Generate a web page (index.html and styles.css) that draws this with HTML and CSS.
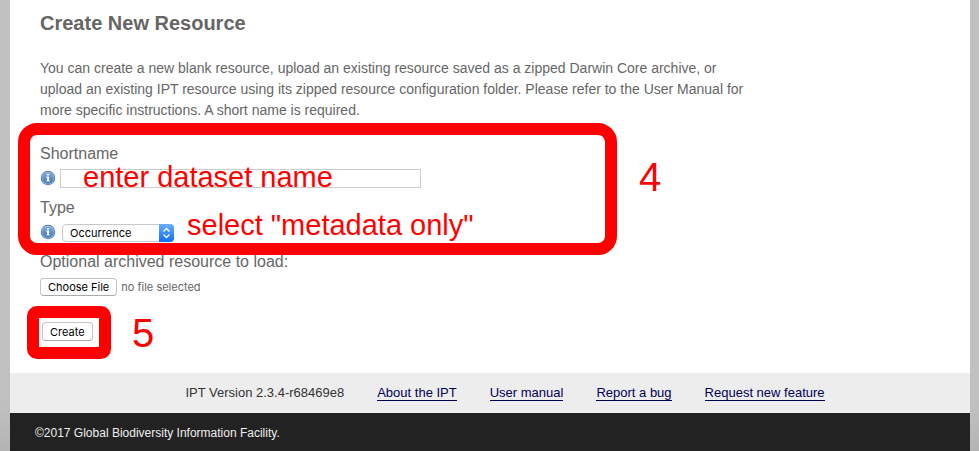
FILE: index.html
```html
<!DOCTYPE html>
<html lang="en">
<head>
<meta charset="utf-8">
<title>Create New Resource</title>
<link rel="stylesheet" href="styles.css">
</head>
<body>
<svg class="defs" aria-hidden="true">
  <defs>
    <linearGradient id="ball" x1="0" y1="0" x2="0" y2="1">
      <stop offset="0" stop-color="#86addc"/>
      <stop offset="1" stop-color="#3f74b8"/>
    </linearGradient>
    <symbol id="info" viewBox="0 0 16 16">
      <circle cx="8" cy="8" r="7.2" fill="#3f6fae"/>
      <circle cx="8" cy="8" r="6.4" fill="#a9c4e6"/>
      <circle cx="8" cy="8" r="5.8" fill="url(#ball)"/>
      <path d="M7 4h2v1.6H7zM6.3 6.5H9v4h.8v1.1H6.3v-1.1h.8V7.6h-.8z" fill="#fff"/>
    </symbol>
  </defs>
</svg>
<div class="page">
  <main class="content">
    <h1>Create New Resource</h1>
    <p class="intro">You can create a new blank resource, upload an existing resource saved as a zipped Darwin Core archive, or upload an existing IPT resource using its zipped resource configuration folder. Please refer to the User Manual for more specific instructions. A short name is required.</p>
    <form>
      <div class="details">
        <div class="field">
          <label for="shortname">Shortname</label>
          <div class="row">
            <svg class="info"><use href="#info"/></svg>
            <input class="text" id="shortname" type="text">
            <span class="note note-name">enter dataset name</span>
          </div>
        </div>
        <div class="field">
          <label for="type">Type</label>
          <div class="row">
            <svg class="info"><use href="#info"/></svg>
            <span class="picker">
              <select id="type"><option>Occurrence</option></select>
              <svg class="arrows" viewBox="0 0 15 18"><path d="M4.5 7.5 7.5 4.5 10.5 7.5M4.5 10.5 7.5 13.5 10.5 10.5" fill="none" stroke="#fff" stroke-width="1.3"/></svg>
            </span>
            <span class="note note-type">select "metadata only"</span>
          </div>
        </div>
        <span class="frame frame-details"></span>
        <span class="step step-details">4</span>
      </div>
      <div class="field">
        <label for="file">Optional archived resource to load:</label>
        <div class="row upload">
          <span class="button">Choose File</span>
          <span class="filename">no file selected</span>
          <input id="file" type="file">
        </div>
      </div>
      <div class="submit">
        <button class="button" type="submit">Create</button>
        <span class="frame frame-submit"></span>
        <span class="step step-submit">5</span>
      </div>
    </form>
  </main>
  <nav class="links">
    <span>IPT Version 2.3.4-r68469e8</span>
    <a href="#">About the IPT</a>
    <a href="#">User manual</a>
    <a href="#">Report a bug</a>
    <a href="#">Request new feature</a>
  </nav>
  <footer>©2017 Global Biodiversity Information Facility.</footer>
</div>
</body>
</html>
```
FILE: styles.css
```css
* { box-sizing: border-box; }

body {
  margin: 0;
  padding: 0 9px 0 10px;
  background: linear-gradient(#c0c0c0 90%, #b4b4b4);
  font-family: "Liberation Sans", Arial, sans-serif;
  color: #666;
}

.defs { position: absolute; width: 0; height: 0; }

.page { background: #fff; }

.content { padding: 11px 30px 32px; }

h1 {
  margin: 0 0 23px;
  font-size: 20px;
  line-height: 24px;
}

.intro {
  max-width: 720px;
  margin: 0 0 23px;
  font-size: 14px;
  line-height: 21px;
}

.details { position: relative; }

.field { margin-bottom: 10px; }

.field label {
  display: block;
  margin-bottom: 4px;
  font-size: 16px;
  line-height: 20px;
}

.row {
  position: relative;
  display: flex;
  align-items: center;
  height: 20px;
}

.info { width: 16px; height: 16px; margin-right: 4px; }

.text {
  width: 361px;
  height: 19px;
  padding: 0 4px;
  border: 1px solid #ccc;
}

.picker { position: relative; display: flex; margin: 2px 0 0 2px; }

.picker select {
  appearance: none;
  width: 112px;
  height: 18px;
  padding: 0 20px 0 7px;
  border: 1px solid #c8c8c8;
  border-radius: 4px;
  background: #fff;
  color: #000;
  font-family: Inter, sans-serif;
  font-size: 11px;
  line-height: 16px;
}

.arrows {
  position: absolute;
  top: 0;
  right: 0;
  width: 15px;
  height: 18px;
  border-radius: 0 4px 4px 0;
  background: linear-gradient(#6bb1fa, #0f6bfb);
  pointer-events: none;
}

.button {
  height: 18px;
  padding: 0 7px;
  border: 1px solid #c4c4c4;
  border-bottom-color: #aaa;
  border-radius: 4px;
  background: #fff;
  color: #000;
  font-family: Inter, sans-serif;
  font-size: 11px;
  line-height: 16px;
}

.upload { width: 240px; margin-top: 5px; }

.upload input {
  position: absolute;
  inset: 0;
  width: 100%;
  opacity: 0;
}

.filename {
  margin-left: 4px;
  font-family: Inter, sans-serif;
  font-size: 11px;
}

.submit {
  position: relative;
  display: flex;
  width: 55px;
  margin-top: 25px;
  padding-left: 2px;
}

.submit .button { height: 19px; }

.frame {
  position: absolute;
  border: 12px solid #f00;
  pointer-events: none;
}

.frame-details {
  top: -21px;
  left: -22px;
  width: 599px;
  height: 132px;
  border-radius: 19px;
}

.frame-submit {
  top: -16px;
  left: -13px;
  width: 84px;
  height: 53px;
  border-radius: 10px;
}

.note,
.step {
  position: absolute;
  color: #f00;
  white-space: nowrap;
  pointer-events: none;
}

.note { font-size: 29px; line-height: 32px; }
.note-name { top: -7px; left: 43px; }
.note-type { top: -13px; left: 147px; }

.step { font-size: 40px; line-height: 40px; }
.step-details { top: 13px; left: 599px; }
.step-submit { top: -9px; left: 92px; }

.links {
  display: flex;
  justify-content: center;
  gap: 33px;
  height: 40px;
  padding-left: 30px;
  background: #ededed;
  color: #333;
  font-size: 13px;
  line-height: 40px;
}

.links a {
  align-self: center;
  border-bottom: 1px solid #005;
  color: #005;
  line-height: 14px;
  text-decoration: none;
}

footer {
  height: 38px;
  padding: 0 25px;
  background: #222;
  color: #eee;
  font-size: 12px;
  line-height: 40px;
}
```
